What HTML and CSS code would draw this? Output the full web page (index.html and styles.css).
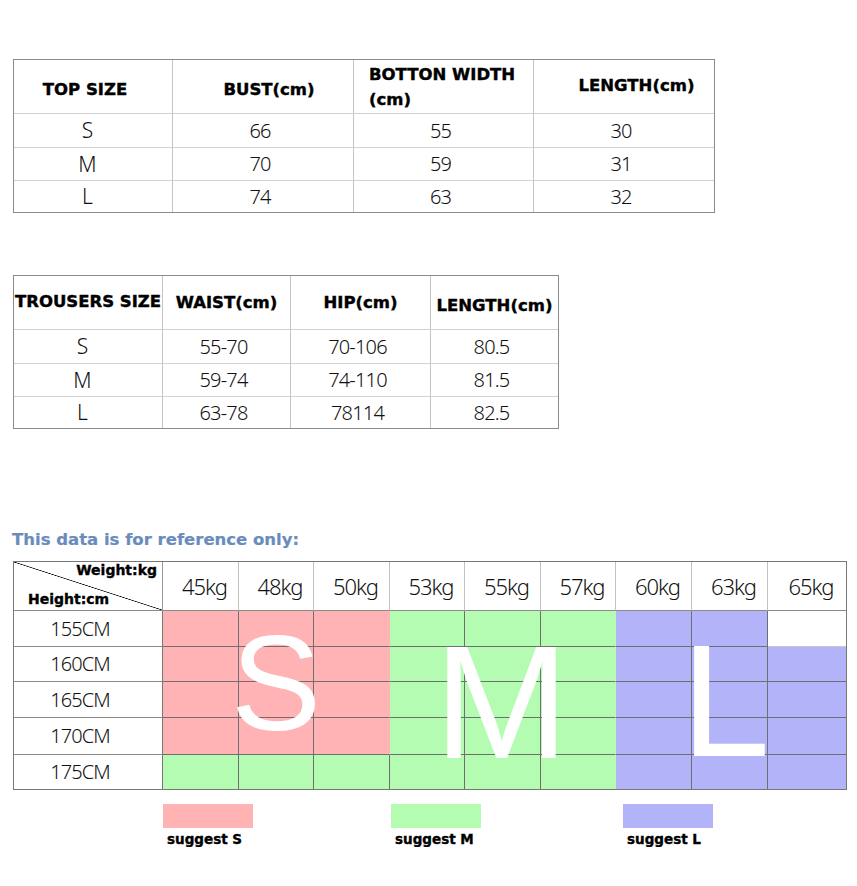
FILE: index.html
```html
<!DOCTYPE html>
<html lang="en">
<head>
<meta charset="utf-8">
<title>Size chart</title>
<link rel="stylesheet" href="styles.css">
</head>
<body>
<main class="page">
  <div class="sizes sizes-top">
    <div class="cell head head-topsize">TOP SIZE</div>
    <div class="cell head head-bust">BUST(cm)</div>
    <div class="cell head head-width">BOTTON WIDTH (cm)</div>
    <div class="cell head head-length">LENGTH(cm)</div>
    <div class="cell first">S</div><div class="cell">66</div><div class="cell">55</div><div class="cell">30</div>
    <div class="cell first">M</div><div class="cell">70</div><div class="cell">59</div><div class="cell">31</div>
    <div class="cell first">L</div><div class="cell">74</div><div class="cell">63</div><div class="cell">32</div>
  </div>

  <div class="sizes sizes-bottom">
    <div class="cell head head-trousers">TROUSERS SIZE</div>
    <div class="cell head">WAIST(cm)</div>
    <div class="cell head">HIP(cm)</div>
    <div class="cell head head-tlength">LENGTH(cm)</div>
    <div class="cell first">S</div><div class="cell">55-70</div><div class="cell">70-106</div><div class="cell">80.5</div>
    <div class="cell first">M</div><div class="cell">59-74</div><div class="cell">74-110</div><div class="cell">81.5</div>
    <div class="cell first">L</div><div class="cell">63-78</div><div class="cell">78114</div><div class="cell">82.5</div>
  </div>

  <h2 class="note">This data is for reference only:</h2>

  <div class="chart">
    <div class="chart-grid">
      <div class="ch diag"><span class="wt">Weight:kg</span><span class="ht">Height:cm</span></div>
      <div class="ch wl">45kg</div><div class="ch wl">48kg</div><div class="ch wl">50kg</div>
      <div class="ch wl">53kg</div><div class="ch wl">55kg</div><div class="ch wl">57kg</div>
      <div class="ch wl">60kg</div><div class="ch wl">63kg</div><div class="ch wl">65kg</div>

      <div class="ch rl">155CM</div>
      <div class="ch p"></div><div class="ch p"></div><div class="ch p edge"></div>
      <div class="ch g"></div><div class="ch g"></div><div class="ch g edge"></div>
      <div class="ch b"></div><div class="ch b"></div><div class="ch w"></div>

      <div class="ch rl">160CM</div>
      <div class="ch p"></div><div class="ch p"></div><div class="ch p edge"></div>
      <div class="ch g"></div><div class="ch g"></div><div class="ch g edge"></div>
      <div class="ch b"></div><div class="ch b"></div><div class="ch b"></div>

      <div class="ch rl">165CM</div>
      <div class="ch p"></div><div class="ch p"></div><div class="ch p edge"></div>
      <div class="ch g"></div><div class="ch g"></div><div class="ch g edge"></div>
      <div class="ch b"></div><div class="ch b"></div><div class="ch b"></div>

      <div class="ch rl">170CM</div>
      <div class="ch p"></div><div class="ch p"></div><div class="ch p edge"></div>
      <div class="ch g"></div><div class="ch g"></div><div class="ch g edge"></div>
      <div class="ch b"></div><div class="ch b"></div><div class="ch b"></div>

      <div class="ch rl">175CM</div>
      <div class="ch g"></div><div class="ch g"></div><div class="ch g"></div>
      <div class="ch g"></div><div class="ch g"></div><div class="ch g edge"></div>
      <div class="ch b"></div><div class="ch b"></div><div class="ch b"></div>
    </div>
    <span class="big big-s">S</span>
    <span class="big big-m">M</span>
    <span class="big big-l">L</span>
  </div>

  <div class="legend">
    <div class="key"><div class="swatch sw-s"></div><div class="key-label">suggest S</div></div>
    <div class="key"><div class="swatch sw-m"></div><div class="key-label">suggest M</div></div>
    <div class="key key-l"><div class="swatch sw-l"></div><div class="key-label">suggest L</div></div>
  </div>
</main>
</body>
</html>
```
FILE: styles.css
```css
* { box-sizing: border-box; }

body {
  margin: 0;
  background: #ffffff;
  color: #000000;
  font-family: "DejaVu Sans", sans-serif;
}

.page {
  padding: 59px 0 0 13px;
}

/* ---------- size tables ---------- */
.sizes {
  display: grid;
  width: max-content;
  border: 1px solid #8a8a8a;
}

.sizes-top {
  grid-template-columns: 159px 181px 180px 180px;
  grid-template-rows: 54px 34px 33px 31px;
}

.sizes-bottom {
  grid-template-columns: 149px 128px 140px 127px;
  grid-template-rows: 54px 34px 33px 31px;
  margin-top: 62px;
}

.cell {
  display: flex;
  align-items: center;
  justify-content: center;
  border-right: 1px solid #c4c4c4;
  border-bottom: 1px solid #d2d2d2;
  padding-right: 6px;
  font-family: "Noto Sans", "Open Sans", sans-serif;
  font-weight: 300;
  font-size: 20px;
  line-height: 1;
  letter-spacing: -0.8px;
  color: #111111;
}

.sizes > .cell:nth-child(4n) { border-right: none; }
.sizes > .cell:nth-last-child(-n+4) { border-bottom: none; }

.cell.first {
  font-size: 21px;
  letter-spacing: 0;
  padding-right: 11px;
}

.cell.head {
  font-family: "DejaVu Sans", sans-serif;
  font-weight: 700;
  font-size: 16.5px;
  line-height: 25px;
  letter-spacing: 0;
  color: #000000;
  -webkit-text-stroke: 0.4px #000000;
  padding: 0;
}

.cell.head-topsize { padding: 6px 16px 0 0; }
.cell.head-bust { padding: 5px 0 0 12px; }
.cell.head-width {
  justify-content: flex-start;
  text-align: left;
  padding: 0 10px 0 15px;
}
.cell.head-length { padding: 0 0 3px 25px; }
.cell.head-trousers { padding: 0 0 3px 0; }
.cell.head-tlength { padding: 5px 0 0 0; }

/* ---------- note ---------- */
.note {
  margin: 101px 0 11px -1px;
  font-family: "DejaVu Sans", sans-serif;
  font-weight: 700;
  font-size: 16.5px;
  line-height: 20px;
  color: #6a8cbd;
  -webkit-text-stroke: 0.2px #6a8cbd;
}

/* ---------- chart ---------- */
.chart {
  position: relative;
  width: max-content;
}

.chart-grid {
  display: grid;
  border: 1px solid #777777;
  grid-template-columns: 149px 76px 75px 76px 75px 76px 75px 76px 76px 78px;
  grid-template-rows: 49px 36px 35px 36px 37px 34px;
}

.ch {
  display: flex;
  align-items: center;
  justify-content: center;
  border-right: 1px solid #c2c2c2;
  border-bottom: 1px solid #8a8a8a;
  font-family: "Noto Sans", "Open Sans", sans-serif;
  font-weight: 300;
  font-size: 22px;
  line-height: 1;
  letter-spacing: -1.1px;
  color: #111111;
}

.chart-grid > .ch:nth-child(10n) { border-right: none; }
.chart-grid > .ch:nth-last-child(-n+10) { border-bottom: none; }

.ch.wl { padding-left: 8px; }

.ch.rl {
  font-size: 20px;
  letter-spacing: -0.9px;
  padding-right: 16px;
  border-right-color: #777777;
}

.ch.diag {
  flex-direction: column;
  align-items: stretch;
  justify-content: space-between;
  padding: 0 5px 3px 14px;
  border-right-color: #9a9a9a;
  font-family: "DejaVu Sans", sans-serif;
  font-weight: 700;
  font-size: 14px;
  line-height: 16px;
  letter-spacing: 0;
  color: #000000;
  -webkit-text-stroke: 0.35px #000000;
  background: linear-gradient(to top right,
    transparent calc(50% - 0.7px),
    #000000 50%,
    transparent calc(50% + 0.7px));
}

.diag .wt { text-align: right; }
.diag .ht { text-align: left; }

.ch.p { background: #ffb3b4; border-color: #6f6f6f; }
.ch.g { background: #b3fcb1; border-color: #6f6f6f; }
.ch.b { background: #b3b3fa; border-color: #6f6f6f; }
.ch.w { background: #ffffff; border-bottom-color: #c8c8c8; }
.ch.edge { border-right-color: transparent; }

.big {
  position: absolute;
  font-family: "Liberation Sans", Arial, sans-serif;
  font-weight: 400;
  line-height: 1;
  color: #ffffff;
  pointer-events: none;
}

.big-s { left: 218px; top: 55px; font-size: 135px; }
.big-m { left: 421px; top: 60px; font-size: 162px; }
.big-l { left: 668px; top: 60px; font-size: 160px; }

/* ---------- legend ---------- */
.legend {
  display: flex;
  gap: 138px;
  margin: 14px 0 0 150px;
}

.key { width: 90px; }
.key-l { margin-left: 4px; }

.swatch { height: 24px; }
.sw-s { background: #ffb3b4; }
.sw-m { background: #b3fcb1; }
.sw-l { background: #b3b3fa; }

.key-label {
  margin-top: 3px;
  padding-left: 4px;
  font-family: "DejaVu Sans", sans-serif;
  font-weight: 700;
  font-size: 13.5px;
  line-height: 16px;
  white-space: nowrap;
  -webkit-text-stroke: 0.35px #000000;
}
```
